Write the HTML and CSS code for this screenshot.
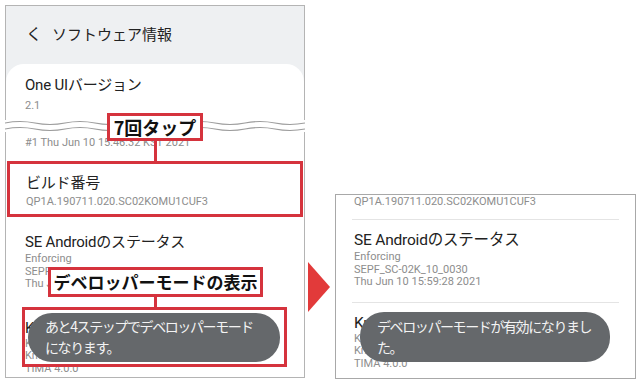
FILE: index.html
```html
<!DOCTYPE html>
<html lang="ja">
<head>
    <meta charset="UTF-8">
    <title>ソフトウェア情報</title>
    <link rel="stylesheet" href="styles.css">
</head>
<body>
    <div class="stage">
        <!-- Left phone: before -->
        <div class="phone-left">
            <div class="phone-top">
                <div class="header">
                    <span class="back">く</span>
                    <span class="title">ソフトウェア情報</span>
                </div>
                <div class="card">
                    <div class="row">
                        <div class="row-title">One UIバージョン</div>
                        <div class="row-sub">2.1</div>
                    </div>
                </div>
            </div>

            <svg class="tear" width="300" height="12" viewBox="0 0 300 12">
                <path d="M0 3 q15 -3 30 0 t30 0 t30 0 t30 0 t30 0 t30 0 t30 0 t30 0 t30 0 t30 0" fill="none" stroke="#9c9c9c" stroke-width="1.1"/>
                <path d="M0 9 q15 -3 30 0 t30 0 t30 0 t30 0 t30 0 t30 0 t30 0 t30 0 t30 0 t30 0" fill="none" stroke="#9c9c9c" stroke-width="1.1"/>
            </svg>

            <div class="phone-bottom">
                <div class="row">
                    <div class="cut-line"><span>4.14.78-21264877</span></div>
                    <div class="row-sub">#1 Thu Jun 10 15:46:32 KST 2021</div>
                </div>
                <div class="row build">
                    <div class="row-title">ビルド番号</div>
                    <div class="row-sub">QP1A.190711.020.SC02KOMU1CUF3</div>
                </div>
                <div class="row se">
                    <div class="row-title">SE Androidのステータス</div>
                    <div class="row-sub">Enforcing</div>
                    <div class="row-sub">SEPF_SC-02K_10_0030</div>
                    <div class="row-sub">Thu Jun 10 15:59:28 2021</div>
                </div>
                <div class="row knox">
                    <div class="row-title">Knoxバージョン</div>
                    <div class="row-sub">Knox 3.6</div>
                    <div class="row-sub">Knox API level 33</div>
                    <div class="row-sub">TIMA 4.0.0</div>
                </div>
            </div>

            <!-- annotations -->
            <div class="callout tap">7回タップ</div>
            <div class="connector tap-line"></div>
            <div class="callout mode">デベロッパーモードの表示</div>
            <div class="connector mode-line"></div>
            <div class="toast-frame">
                <div class="toast">あと4ステップでデベロッパーモード<br>になります。</div>
            </div>
        </div>

        <div class="arrow"></div>

        <!-- Right phone: after -->
        <div class="phone-right">
            <div class="row">
                <div class="row-sub">QP1A.190711.020.SC02KOMU1CUF3</div>
            </div>
            <div class="divider"></div>
            <div class="row se">
                <div class="row-title">SE Androidのステータス</div>
                <div class="row-sub">Enforcing</div>
                <div class="row-sub">SEPF_SC-02K_10_0030</div>
                <div class="row-sub">Thu Jun 10 15:59:28 2021</div>
            </div>
            <div class="divider"></div>
            <div class="row knox">
                <div class="row-title">Knoxバージョン</div>
                <div class="row-sub">Knox 3.6</div>
                <div class="row-sub">Knox API level 33</div>
                <div class="row-sub">TIMA 4.0.0</div>
            </div>
            <div class="toast toast-right">デベロッパーモードが有効になりまし<br>た。</div>
        </div>
    </div>
</body>
</html>
```

FILE: styles.css
```css
/* Page */
body {
    margin: 0;
    background: #fff;
    font-family: Roboto, "Noto Sans CJK JP", sans-serif;
    color: #222;
}

.stage {
    display: flex;
    height: 384px;
    padding: 5px 0 5px 5px;
    box-sizing: border-box;
}

/* Left phone */
.phone-left {
    position: relative;
    width: 300px;
    height: 373px;
    display: flex;
    flex-direction: column;
}

.phone-top {
    height: 115px;
    border: 1px solid #b4b4b4;
    border-bottom: none;
    background: #eef0f2;
    box-sizing: border-box;
}

.header {
    height: 58px;
    display: flex;
    align-items: center;
    padding: 0 0 4px 20px;
    box-sizing: border-box;
    font-family: "Noto Sans CJK JP", sans-serif;
    font-size: 15px;
}

.back {
    width: 26px;
    font-size: 16px;
}

.card {
    height: 56px;
    background: #fff;
    border-radius: 18px 18px 0 0;
    padding-top: 11px;
    box-sizing: border-box;
}

.tear {
    display: block;
    flex: none;
}

.phone-bottom {
    flex: 1;
    border: 1px solid #b4b4b4;
    border-top: none;
    overflow: hidden;
}

/* Rows */
.row {
    padding-left: 19px;
}

.row-title {
    font-size: 15px;
    line-height: 20px;
    letter-spacing: -0.2px;
}

.row-sub {
    font-size: 11px;
    line-height: 12.5px;
    color: #8d8d8d;
}

.card .row-sub {
    margin-top: 4px;
    line-height: 14px;
}

.cut-line {
    height: 4px;
    overflow: hidden;
    font-size: 11px;
    color: #9a9a9a;
}

.cut-line span {
    display: block;
    margin-top: -9px;
    line-height: 12px;
}

.phone-bottom .row:first-child .row-sub {
    line-height: 14px;
}

.build {
    margin: 11px 1px 0;
    border: 3px solid #d5333d;
    height: 56px;
    box-sizing: border-box;
    padding: 9px 0 0 16px;
}

.build .row-sub {
    margin-top: 2px;
    line-height: 14px;
}

.se {
    margin-top: 15px;
}

.se .row-title {
    margin-bottom: 1px;
}

.knox {
    margin-top: 27px;
}

/* Annotations */
.callout {
    position: absolute;
    background: #fff;
    border: 3px solid #d5333d;
    box-sizing: border-box;
    font-family: "Noto Sans CJK JP", sans-serif;
    font-weight: 700;
    font-size: 17px;
    line-height: 22px;
    text-align: center;
    white-space: nowrap;
    color: #111;
}

.tap {
    left: 102px;
    top: 108px;
    width: 96px;
    height: 28px;
    font-size: 18px;
}

.mode {
    left: 43px;
    top: 262px;
    width: 215px;
    height: 30px;
    line-height: 24px;
}

.connector {
    position: absolute;
    left: 149px;
    width: 3px;
    background: #d5333d;
}

.tap-line {
    top: 136px;
    height: 20px;
}

.mode-line {
    top: 292px;
    height: 10px;
}

.toast-frame {
    position: absolute;
    left: 17px;
    top: 302px;
    width: 265px;
    height: 60px;
    border: 3px solid #d5333d;
    box-sizing: border-box;
    padding: 3px 4px 0 3px;
}

.toast {
    height: 49px;
    background: #65686b;
    border-radius: 24px;
    color: #f3f3f3;
    font-family: "Noto Sans CJK JP", sans-serif;
    font-size: 14px;
    letter-spacing: -1.4px;
    line-height: 21px;
    white-space: nowrap;
    padding: 3px 0 0 17px;
    box-sizing: border-box;
}

/* Arrow */
.arrow {
    align-self: flex-end;
    margin: 0 0 67px 3px;
    width: 0;
    height: 0;
    border-left: 22px solid #e23a3a;
    border-top: 25px solid transparent;
    border-bottom: 25px solid transparent;
}

/* Right phone */
.phone-right {
    position: relative;
    align-self: flex-end;
    margin-left: 5px;
    width: 301px;
    height: 185px;
    border: 1px solid #a8a8a8;
    box-sizing: border-box;
    overflow: hidden;
}

.phone-right .row {
    padding-left: 18px;
}

.phone-right .row:first-child .row-sub {
    line-height: 14px;
}

.phone-right .row-title {
    font-size: 15.5px;
}

.divider {
    height: 1px;
    background: #e4e4e4;
    margin: 10px 16px 10px;
}

.phone-right .se {
    margin-top: 0;
}

.phone-right .se + .divider {
    margin-top: 13px;
}

.phone-right .knox {
    margin-top: 2px;
}

.toast-right {
    position: absolute;
    left: 24px;
    top: 117px;
    width: 250px;
    height: 50px;
    padding-top: 4px;
}
```
